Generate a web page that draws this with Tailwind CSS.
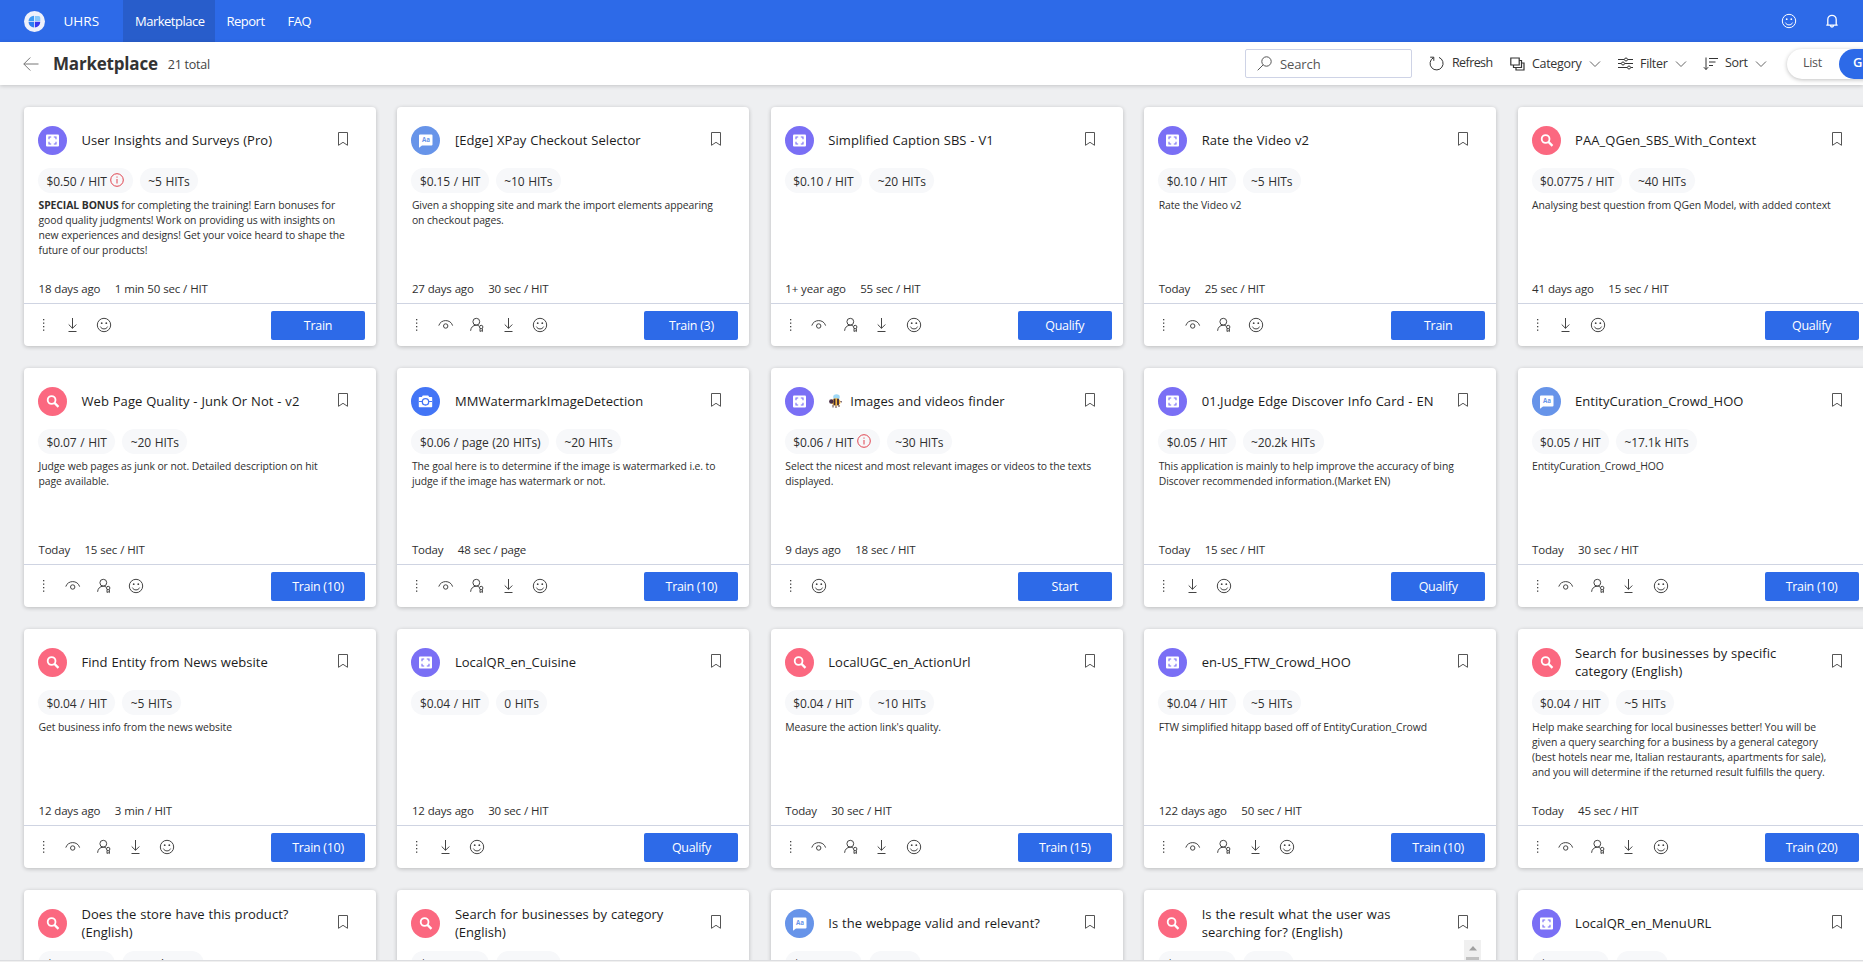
<!DOCTYPE html>
<html lang="en">
<head>
<meta charset="utf-8">
<title>UHRS Marketplace</title>
<script src="https://cdn.jsdelivr.net/npm/@tailwindcss/browser@4"></script>
</head>
<body class="h-[962px] w-[1863px] overflow-hidden bg-[#eeeff1] font-['Open_Sans','Noto_Sans',sans-serif] text-[#2f2f2f]">
<svg class="hidden">
  <symbol id="smile" viewBox="0 0 16 16"><g fill="none" stroke="currentColor"><circle cx="8" cy="8" r="6.7"/><path d="M4.4 9.6c.7 1.6 2 2.3 3.6 2.3s2.900-.7 3.600-2.300"/></g><circle cx="5.700" cy="6.200" r=".9" fill="currentColor"/><circle cx="10.300" cy="6.200" r=".9" fill="currentColor"/></symbol>
  <symbol id="dots" viewBox="0 0 16 16"><g fill="currentColor"><rect x="7" y="2" width="1.300" height="1.300"/><rect x="7" y="5.500" width="1.300" height="1.300"/><rect x="7" y="9" width="1.300" height="1.300"/><rect x="7" y="12.500" width="1.300" height="1.300"/></g></symbol>
  <symbol id="eye" viewBox="0 0 16 16"><g fill="none" stroke="currentColor"><path d="M.8 8.600C1.800 5.200 4.700 3.600 7.700 3.600s5.900 1.600 6.900 5"/><circle cx="7.700" cy="9" r="2.200"/></g></symbol>
  <symbol id="user" viewBox="0 0 16 16"><g fill="none" stroke="currentColor"><circle cx="7.300" cy="4.700" r="3.400"/><path d="M1.600 13.800c.2-3.200 2.300-5.600 5.600-5.600 1.300 0 2 .3 2.800.8"/><circle cx="12.200" cy="10" r="1.700"/><path d="M11 11.500v3l1.200-.8 1.200.8v-3"/></g></symbol>
  <symbol id="down" viewBox="0 0 16 16"><path fill="none" stroke="currentColor" d="M7.500 1v10.300M3.700 7.500l3.800 3.800 3.800-3.800M3.500 14.500h8"/></symbol>
  <symbol id="bookmark" viewBox="0 0 12 16"><path fill="none" stroke="currentColor" d="M1.500 1.500h9v12.800L6 11.300l-4.500 3z"/></symbol>
  <symbol id="info" viewBox="0 0 14 14"><circle cx="7" cy="7" r="6.300" fill="none" stroke="currentColor"/><path stroke="currentColor" d="M7 6v4.500M7 3.500v1.200"/></symbol>
  <symbol id="chev" viewBox="0 0 12 12"><path fill="none" stroke="currentColor" d="m1 3.500 5 5 5-5"/></symbol>
  <symbol id="i-frame" viewBox="0 0 29 29"><circle cx="14.500" cy="14.500" r="14.500" fill="#7a6ff5"/><rect x="8" y="8.500" width="13" height="12" rx="1" fill="#fff"/><path fill="none" stroke="#7a6ff5" stroke-width="1.100" d="M11 13.200v-2.200h2.200M15.800 11H18v2.200M18 15.800V18h-2.200M13.200 18H11v-2.200"/></symbol>
  <symbol id="i-search" viewBox="0 0 29 29"><circle cx="14.500" cy="14.500" r="14.500" fill="#fb6880"/><circle cx="13.600" cy="13" r="3.900" fill="none" stroke="#fff" stroke-width="1.800"/><path stroke="#fff" stroke-width="2.200" d="m16.200 15.600 4.300 4.300"/></symbol>
  <symbol id="i-chat" viewBox="0 0 29 29"><circle cx="14.500" cy="14.500" r="14.500" fill="#6794e9"/><path fill="#fff" d="M9 8.500h11.500a1 1 0 0 1 1 1v9a1 1 0 0 1-1 1H11l-3 2.300V9.500a1 1 0 0 1 1-1z"/><text x="11" y="16.200" font-size="6.200" font-weight="700" fill="#6794e9">Aa</text></symbol>
  <symbol id="i-cam" viewBox="0 0 29 29"><circle cx="14.500" cy="14.500" r="14.500" fill="#4375f6"/><path fill="#fff" d="M8.500 10h2.300l1-1.500h5.400l1 1.500h2.300a.7.7 0 0 1 .7.7v8.800a.7.7 0 0 1-.7.700h-12a.7.7 0 0 1-.7-.7v-8.800a.7.7 0 0 1 .7-.7z"/><circle cx="14.500" cy="14.800" r="3.200" fill="none" stroke="#4375f6" stroke-width="1.300"/><path stroke="#4375f6" stroke-width="1.200" d="M8 14.500h3M18 14.500h3"/></symbol>
  <symbol id="bee" viewBox="0 0 16 16"><ellipse cx="8.500" cy="4" rx="3.300" ry="2.800" fill="#9fd8f5"/><path stroke="#5b3a35" stroke-width="1" d="M5 12v2.500M8 12v3M11 12v2"/><ellipse cx="8" cy="9" rx="4.600" ry="3.700" fill="#f6b73c"/><path stroke="#3d2a3c" stroke-width="1.800" d="M6.500 5.700v6.600M10 5.700v6.600"/><circle cx="3.300" cy="8.500" r="2.200" fill="#4a2f45"/><path stroke="#4a2f45" d="m12.500 8.500 1.500.5"/></symbol>
</svg>

<div class="relative flex h-full flex-col overflow-hidden">
  <header class="flex h-[42px] shrink-0 items-center bg-[#2d6ae8] text-[13px] text-white">
    <svg class="ml-6 size-[21px] shrink-0" viewBox="0 0 21 21"><circle cx="10.500" cy="10.500" r="10.500" fill="#eef1fb"/><path fill="#3d9bf5" d="M10 4.700V10H4.500A5.700 5.700 0 0 1 10 4.700z"/><path fill="#2d7df2" d="M4.500 10.800H10v5.700a5.700 5.700 0 0 1-5.500-5.700z"/><path fill="#3a35ee" d="M10.800 10.800h5.500a5.700 5.700 0 0 1-5.500 5.700z"/><path fill="#86c8fb" d="M10.800 5h3.800a1.700 1.700 0 0 1 1.700 1.700V10h-5.500z"/></svg>
    <div class="ml-[18.500px] w-[59.500px] text-[13.500px]">UHRS</div>
    <nav class="flex h-full pt-px">
      <a class="-mt-px flex w-[92px] items-center bg-[#285dcb] pl-3 pt-px tracking-[-0.5px]">Marketplace</a>
      <a class="flex items-center pl-[11.500px] tracking-[-0.5px]">Report</a>
      <a class="flex items-center pl-[23px] tracking-[-0.5px]">FAQ</a>
    </nav>
    <svg class="ml-auto mr-[27px] size-4"><use href="#smile"/></svg>
    <svg class="mr-[23px] size-4" viewBox="0 0 16 16"><path fill="none" stroke="currentColor" stroke-width="1.300" d="M3.800 12V6.500a4.200 4.200 0 0 1 8.400 0V12M2.300 12.200h11.400M6.500 12.500a1.500 1.500 0 0 0 3 0"/></svg>
  </header>

  <div class="z-10 flex h-[43px] shrink-0 items-center bg-white shadow-[0_1px_4px_rgba(0,0,0,0.18)]">
    <svg class="ml-[23px] h-4 w-4 shrink-0 text-[#777]" viewBox="0 0 16 16"><path fill="none" stroke="currentColor" d="M15.500 8H.8M7.300 1.500.8 8l6.500 6.500"/></svg>
    <h1 class="ml-[14px] text-[17px] font-bold tracking-[-0.2px] text-[#333]">Marketplace</h1>
    <span class="ml-[10px] pt-[4px] text-[12.500px] tracking-[-0.25px] text-[#444]">21 total</span>
    <div class="absolute left-[1245px] flex items-center text-[12.500px] tracking-[-0.3px] text-[#333]">
      <div class="flex h-[29px] w-[167px] items-center rounded-[2px] border border-[#ced3e6] pl-[11px] text-[13px] tracking-[-0.1px] text-[#555]">
        <svg class="mr-2 size-[15px]" viewBox="0 0 15 15"><g fill="none" stroke="currentColor"><circle cx="9.500" cy="5.500" r="4.700"/><path d="M6.200 8.800.7 14.300"/></g></svg><span class="pt-[3px]">Search</span>
      </div>
      <div class="ml-[17px] flex w-[81px] items-center tracking-[-0.600px]"><svg class="mr-2 size-[15px]" viewBox="0 0 15 15"><g fill="none" stroke="currentColor"><path d="M10 1.400a6.500 6.500 0 1 1-5.500.3M1.200 1.200h3.600v3.600"/></g></svg>Refresh</div>
      <div class="flex w-[108px] items-center"><svg class="mr-[7px] size-[15px]" viewBox="0 0 15 15"><g fill="none" stroke="currentColor" stroke-width="1.200"><path d="M.8 2h8.400v7H.8zM3.500 9.500v2h8v-7H9.500M6 12v2h8V7h-2"/></g></svg><span class="pt-[2px]">Category</span><svg class="ml-[7px] size-3 text-[#666]"><use href="#chev"/></svg></div>
      <div class="flex w-[85px] items-center"><svg class="mr-[7px] size-[15px]" viewBox="0 0 15 15"><g fill="none" stroke="currentColor"><path d="M0 3.500h6M10 3.500h5M0 7.500h3M7 7.500h8M0 11.500h9M13 11.500h2"/><circle cx="8" cy="3.500" r="1.500"/><circle cx="5" cy="7.500" r="1.500"/><circle cx="11" cy="11.500" r="1.500"/></g></svg><span class="pt-[2px]">Filter</span><svg class="ml-[7px] size-3 text-[#666]"><use href="#chev"/></svg></div>
      <div class="flex w-[84px] items-center"><svg class="mr-[7px] size-[15px]" viewBox="0 0 15 15"><path fill="none" stroke="currentColor" d="M3 1.500v12M.8 11.200 3 13.500l2.200-2.300M6 2.500h9M6 6h6.500M6 9.500h4"/></svg>Sort<svg class="ml-[7px] size-3 text-[#666]"><use href="#chev"/></svg></div>
      <div class="flex h-[30px] w-[110px] shrink-0 overflow-hidden rounded-full bg-white shadow-[0_1px_4px_rgba(0,0,0,0.25)]">
        <span class="w-[52px] pl-[16px] leading-[27px] text-[#555]">List</span>
        <span class="flex-1 rounded-full bg-[#2d6ae8] pl-[14px] text-[13px] font-semibold leading-[27px] text-white">Grid</span>
      </div>
    </div>
  </div>

  <main id="grid" class="grid h-[877px] w-[1887px] shrink-0 grid-cols-[repeat(5,352px)] content-start gap-x-[21.400px] gap-y-[22px] overflow-hidden pl-6 pt-[22px]"></main>

  <div class="absolute left-[1464px] top-[940px] flex h-[22px] w-[17px] flex-col items-center overflow-hidden bg-[#f0f0f0]">
    <svg class="mt-[6px] h-[5px] w-[8px] shrink-0" viewBox="0 0 8 5"><path fill="#a0a0a0" d="M4 0 8 4.500H0z"/></svg>
    <div class="mt-[6px] h-4 w-[13px] shrink-0 bg-[#c1c1c1]"></div>
  </div>
  <div class="absolute bottom-0 left-0 z-20 h-[2px] w-full border-t border-[#dcdde0] bg-[#f0f0f0]"></div>
</div>

<script>
const cards = [
  ['frame','User Insights and Surveys (Pro)','$0.50 / HIT',1,'~5 HITs','<b class="font-bold">SPECIAL BONUS</b> for completing the training! Earn bonuses for<br>good quality judgments! Work on providing us with insights on<br>new experiences and designs! Get your voice heard to shape the<br>future of our products!','18 days ago','1 min 50 sec / HIT','down smile','Train'],
  ['chat','[Edge] XPay Checkout Selector','$0.15 / HIT',0,'~10 HITs','Given a shopping site and mark the import elements appearing<br>on checkout pages.','27 days ago','30 sec / HIT','eye user down smile','Train (3)'],
  ['frame','Simplified Caption SBS - V1','$0.10 / HIT',0,'~20 HITs','','1+ year ago','55 sec / HIT','eye user down smile','Qualify'],
  ['frame','Rate the Video v2','$0.10 / HIT',0,'~5 HITs','Rate the Video v2','Today','25 sec / HIT','eye user smile','Train'],
  ['search','PAA_QGen_SBS_With_Context','$0.0775 / HIT',0,'~40 HITs','Analysing best question from QGen Model, with added context','41 days ago','15 sec / HIT','down smile','Qualify'],
  ['search','Web Page Quality - Junk Or Not - v2','$0.07 / HIT',0,'~20 HITs','Judge web pages as junk or not. Detailed description on hit<br>page available.','Today','15 sec / HIT','eye user smile','Train (10)'],
  ['cam','MMWatermarkImageDetection','$0.06 / page (20 HITs)',0,'~20 HITs','The goal here is to determine if the image is watermarked i.e. to<br>judge if the image has watermark or not.','Today','48 sec / page','eye user down smile','Train (10)'],
  ['frame','<svg class="mr-[6px] inline-block size-4 align-[-3px]"><use href="#bee"/></svg>Images and videos finder','$0.06 / HIT',1,'~30 HITs','Select the nicest and most relevant images or videos to the texts<br>displayed.','9 days ago','18 sec / HIT','smile','Start'],
  ['frame','01.Judge Edge Discover Info Card - EN','$0.05 / HIT',0,'~20.2k HITs','This application is mainly to help improve the accuracy of bing<br>Discover recommended information.(Market EN)','Today','15 sec / HIT','down smile','Qualify'],
  ['chat','EntityCuration_Crowd_HOO','$0.05 / HIT',0,'~17.1k HITs','EntityCuration_Crowd_HOO','Today','30 sec / HIT','eye user down smile','Train (10)'],
  ['search','Find Entity from News website','$0.04 / HIT',0,'~5 HITs','Get business info from the news website','12 days ago','3 min / HIT','eye user down smile','Train (10)'],
  ['frame','LocalQR_en_Cuisine','$0.04 / HIT',0,'0 HITs','','12 days ago','30 sec / HIT','down smile','Qualify'],
  ['search','LocalUGC_en_ActionUrl','$0.04 / HIT',0,'~10 HITs','Measure the action link\'s quality.','Today','30 sec / HIT','eye user down smile','Train (15)'],
  ['frame','en-US_FTW_Crowd_HOO','$0.04 / HIT',0,'~5 HITs','FTW simplified hitapp based off of EntityCuration_Crowd','122 days ago','50 sec / HIT','eye user down smile','Train (10)'],
  ['search','Search for businesses by specific<br>category (English)','$0.04 / HIT',0,'~5 HITs','Help make searching for local businesses better! You will be<br>given a query searching for a business by a general category<br>(best hotels near me, Italian restaurants, apartments for sale),<br>and you will determine if the returned result fulfills the query.','Today','45 sec / HIT','eye user down smile','Train (20)'],
  ['search','Does the store have this product?<br>(English)','$0.04 / HIT',0,'~17.1k HITs'],
  ['search','Search for businesses by category<br>(English)','$0.04 / HIT',0,'~20 HITs'],
  ['chat','Is the webpage valid and relevant?','$0.04 / HIT',0,'0 HITs'],
  ['search','Is the result what the user was<br>searching for? (English)','$0.04 / HIT',0,'0 HITs'],
  ['frame','LocalQR_en_MenuURL','$0.04 / HIT',0,'0 HITs'],
];
const pill = 'flex h-[25px] items-center rounded-full bg-[#f7f8fa] px-[8.500px] pt-[2px]';
document.getElementById('grid').innerHTML = cards.map(([icon, title, pay, bonus, hits, desc, age, time, tools, action]) => `
  <article class="flex h-[239px] flex-col rounded-[4px] bg-white shadow-[0_1px_4px_rgba(0,0,0,0.22)]">
    <div class="flex h-[61px] shrink-0 items-center pl-[14px] pt-[6px]">
      <svg class="size-[29px] shrink-0"><use href="#i-${icon}"/></svg>
      <h2 class="-mt-px ml-[14.500px] flex-1 whitespace-nowrap text-[13px] font-medium leading-[18px] tracking-[0.05px] text-[#1c1c1c] [word-spacing:0.4px]">${title}</h2>
      <svg class="mb-[3px] mr-[27px] h-4 w-3 shrink-0 text-[#555]"><use href="#bookmark"/></svg>
    </div>
    <div class="flex gap-[7px] whitespace-nowrap pl-[14px] text-[12px] tracking-[-0.1px] [word-spacing:0.7px]">
      <span class="${pill}">${pay}${bonus ? '<svg class="mb-1 ml-[3.500px] size-[14px] text-[#e0434f]"><use href="#info"/></svg>' : ''}</span>
      <span class="${pill}">${hits}</span>
    </div>
    ${action ? `<p class="mt-[5px] h-[76px] whitespace-nowrap pl-[14.500px] text-[10.400px] leading-[15px] tracking-[-0.08px]">${desc}</p>
    <div class="flex h-[30px] items-center gap-[14.500px] whitespace-nowrap border-b border-[#cfd4e2] pl-[14.500px] text-[11.500px] tracking-[-0.2px] [word-spacing:0.3px]"><span>${age}</span><span>${time}</span></div>
    <div class="flex flex-1 items-center pl-[12px] text-[#444]">
      <svg class="mr-[12.500px] size-4"><use href="#dots"/></svg>
      <div class="flex gap-[15.500px]">${tools.split(' ').map(t => `<svg class="size-4"><use href="#${t}"/></svg>`).join('')}</div>
      <button class="ml-auto mr-[11px] h-[29px] w-[94px] rounded-[2px] bg-[#2d6ae8] pt-[2px] text-[12.500px] tracking-[-0.3px] text-white">${action}</button>
    </div>` : ''}
  </article>`).join('');
</script>
</body>
</html>
